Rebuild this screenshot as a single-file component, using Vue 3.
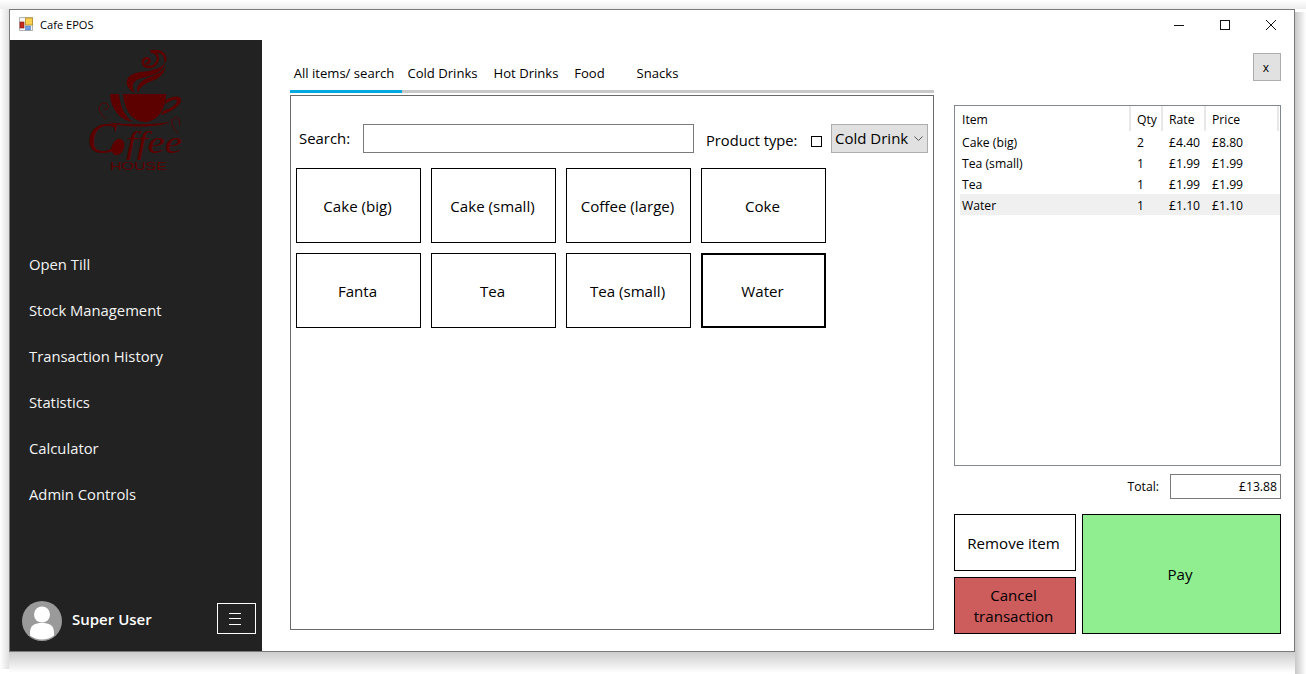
<script setup>
const nav = ['Open Till', 'Stock Management', 'Transaction History', 'Statistics', 'Calculator', 'Admin Controls']
const tabs = ['All items/ search', 'Cold Drinks', 'Hot Drinks', 'Food', 'Snacks']
const products = ['Cake (big)', 'Cake (small)', 'Coffee (large)', 'Coke', 'Fanta', 'Tea', 'Tea (small)', 'Water']
const rows = [
  { item: 'Cake (big)', qty: 2, rate: '£4.40', price: '£8.80' },
  { item: 'Tea (small)', qty: 1, rate: '£1.99', price: '£1.99' },
  { item: 'Tea', qty: 1, rate: '£1.99', price: '£1.99' },
  { item: 'Water', qty: 1, rate: '£1.10', price: '£1.10', selected: true }
]
</script>

<template>
  <div class="desk">
    <div class="window">
      <header class="titlebar">
        <svg class="app-icon" width="15" height="15" viewBox="0 0 15 15">
          <rect x="0.5" y="0.5" width="13" height="13" fill="#f4f4f4" stroke="#b5b5b5" />
          <rect x="1" y="5" width="4" height="6" fill="#c8281e" stroke="#7d1a14" stroke-width="0.6" />
          <rect x="6.5" y="1" width="7" height="7" fill="#f8d050" stroke="#b98a20" stroke-width="0.8" />
          <rect x="6.5" y="9" width="5" height="4" fill="#6f9fe6" stroke="#4a6fb0" stroke-width="0.5" />
        </svg>
        <span class="app-title">Cafe EPOS</span>
        <div class="controls">
          <svg width="12" height="12" viewBox="0 0 12 12"><path d="M1 6.5h10" stroke="#111" fill="none" /></svg>
          <svg width="12" height="12" viewBox="0 0 12 12"><rect x="1.5" y="1.5" width="9" height="9" stroke="#111" fill="none" /></svg>
          <svg width="12" height="12" viewBox="0 0 12 12"><path d="M1 1l10 10M11 1L1 11" stroke="#111" fill="none" /></svg>
        </div>
      </header>

      <div class="body">
        <aside class="sidebar">
          <svg class="logo" width="100" height="125" viewBox="86 48 100 125" fill="#5c0000">
            <path d="M146 63c3 1 5-3 2-4.500c-4-1-6.500 3-4.500 6c3 4 10 3 13-1.500c3-5 1-11-6-11.500c4-1 13-1 14.500 6c1 3 .5 3-.5 4" fill="none" stroke="#5c0000" stroke-width="2.400" />
            <path d="M165 60C165 68 152 71 141 72C132 73 125 77 127 85C128 88 132 92 135 93C130 85 134 80 142 78C152 76 165 72 165 60Z" />
            <path d="M165.500 66C162 75 148 76 141 82C137 86 136 90 138 93C140 86 146 83 152 81C160 78 165 73 165.500 66Z" />
            <path d="M123 94H166C166 108 158 122 145 122C131 122 124 108 123 94Z" />
            <path d="M110 94H119C120 106 125 117 133 122C120 120 111 110 110 94Z" />
            <path d="M166 100C172 96 181 95 181 100C181 106 170 112 161 115L163 111C170 109 177 104 177 101C177 98 170 101 165 104Z" />
            <path d="M108 122C125 125 150 125 170 122C160 128 120 128 108 122Z" />
            <path d="M106 119c-4-4-7-7-7-11c0-4 6-7 9-3c2 3-3 6-4 3" fill="none" stroke="#5c0000" stroke-width="0.9" />
            <path d="M178 133c-4-4-7-8-6-12c1-4 6-5 7-1c1 3 2 5 0 5" fill="none" stroke="#5c0000" stroke-width="0.9" />
            <text class="logo-c" x="87" y="153">C</text>
            <ellipse cx="118" cy="147" rx="6" ry="8.500" transform="rotate(20 118 147)" />
            <text class="logo-ffee" x="126" y="153" textLength="56" lengthAdjust="spacingAndGlyphs">ffee</text>
            <text class="logo-house" x="110" y="170" textLength="57" lengthAdjust="spacingAndGlyphs">HOUSE</text>
          </svg>

          <nav class="nav">
            <a v-for="n in nav" :key="n" class="nav-item">{{ n }}</a>
          </nav>

          <footer class="user">
            <svg class="avatar" width="40" height="40" viewBox="0 0 40 40">
              <circle cx="20" cy="20" r="20" fill="#9a9a9a" />
              <circle cx="20" cy="13.500" r="8" fill="#fff" />
              <path d="M8 32c0-8 5-10 12-10s12 2 12 10v2.500a20 20 0 0 1-24 0Z" fill="#fff" />
            </svg>
            <span class="user-name">Super User</span>
            <button class="menu-btn">
              <svg width="12" height="12" viewBox="0 0 12 12"><path d="M0 .5h12M0 5.500h12M0 11.500h12" stroke="#fff" fill="none" /></svg>
            </button>
          </footer>
        </aside>

        <main class="center">
          <div class="tabs">
            <div v-for="(t, i) in tabs" :key="t" class="tab" :class="{ active: i === 0 }">{{ t }}</div>
          </div>
          <section class="panel">
            <div class="search-row">
              <label class="search-label">Search:</label>
              <div class="search-input"></div>
              <span class="type-label">Product type:</span>
              <span class="checkbox"></span>
              <div class="select">
                <span>Cold Drink</span>
                <svg width="9" height="5" viewBox="0 0 9 5"><path d="M.5.5l4 4 4-4" stroke="#555" fill="none" /></svg>
              </div>
            </div>
            <div class="grid">
              <button v-for="p in products" :key="p" class="product" :class="{ focused: p === 'Water' }">{{ p }}</button>
            </div>
          </section>
        </main>

        <aside class="right">
          <button class="x-btn">x</button>
          <div class="list">
            <div class="list-head">
              <span>Item</span><span>Qty</span><span>Rate</span><span>Price</span>
            </div>
            <div v-for="r in rows" :key="r.item" class="list-row" :class="{ selected: r.selected }">
              <span>{{ r.item }}</span><span>{{ r.qty }}</span><span>{{ r.rate }}</span><span>{{ r.price }}</span>
            </div>
          </div>
          <div class="total-row">
            <span class="total-label">Total:</span>
            <div class="total-box">£13.88</div>
          </div>
          <div class="actions">
            <button class="act remove">Remove item</button>
            <button class="act pay">Pay</button>
            <button class="act cancel">Cancel<br />transaction</button>
          </div>
        </aside>
      </div>
    </div>
  </div>
</template>

<style>
html, body { margin: 0; background: #fff; }
</style>

<style scoped>
* { box-sizing: border-box; }
.desk {
  width: 1306px;
  height: 674px;
  padding: 9px 0 0 9px;
  background:
    linear-gradient(to bottom, rgba(0, 0, 0, .2), rgba(0, 0, 0, 0)) 9px 652px / 1286px 21px no-repeat,
    linear-gradient(to right, rgba(0, 0, 0, .22), rgba(0, 0, 0, 0)) 1295px 12px / 11px 662px no-repeat,
    linear-gradient(to top, rgba(0, 0, 0, .07), rgba(0, 0, 0, 0)) 0 0 / 1306px 9px no-repeat,
    linear-gradient(to left, rgba(0, 0, 0, .12), rgba(0, 0, 0, 0)) 0 9px / 9px 660px no-repeat,
    #fff;
}
.window {
  width: 1286px;
  height: 643px;
  border: 1px solid #7a7a7a;
  background: #fff;
  font-family: "Open Sans", "Noto Sans", sans-serif;
  color: #000;
  display: flex;
  flex-direction: column;
}
.titlebar { height: 30px; display: flex; align-items: center; padding-left: 9px; flex: none; }
.app-icon { margin-top: -1px; }
.app-title { font-size: 11.100px; margin: -1px 0 0 6px; }
.controls { margin-left: auto; display: flex; gap: 34px; margin-right: 17px; }
.body { flex: 1; display: flex; min-height: 0; }

.sidebar { width: 252px; background: #222; display: flex; flex-direction: column; color: #fff; flex: none; }
.logo { display: block; margin: 8px 0 0 76px; flex: none; }
.logo-c { font: italic 44px "Liberation Serif", serif; }
.logo-ffee { font: italic 32px "Liberation Serif", serif; }
.logo-house { font: 10.500px "Liberation Sans", sans-serif; }
.nav { margin-top: 68px; display: flex; flex-direction: column; }
.nav-item { height: 46px; line-height: 47px; padding-left: 19px; font-size: 14.800px; color: #f4f4f4; }
.user { margin-top: auto; display: flex; padding: 0 6px 10px 12px; }
.avatar { flex: none; }
.user-name { margin-left: 10px; font-size: 15px; font-weight: 600; line-height: 37px; }
.menu-btn {
  margin: 2px 0 0 auto; width: 39px; height: 31px; background: transparent; border: 1px solid #fff;
  padding: 0 3px 0 0; display: flex; align-items: center; justify-content: center;
}

.center { margin-left: 28px; width: 644px; padding-top: 20px; flex: none; }
.tabs {
  display: grid; grid-template-columns: 112px 81px 86px 41px 95px 1fr; height: 33px;
  border-bottom: 3px solid #c8c8c8;
}
.tab { height: 33px; font-size: 13.100px; line-height: 26px; text-align: center; white-space: nowrap; }
.tab.active { border-bottom: 3px solid #00a9e0; padding-right: 4px; }
.panel { margin-top: 2px; height: 535px; border: 1px solid #696969; padding: 28px 5px 0; }
.search-row { display: flex; height: 29px; align-items: flex-start; }
.search-label { margin-left: 3px; width: 64px; font-size: 14.900px; line-height: 29px; }
.search-input { width: 331px; height: 29px; border: 1px solid #7a7a7a; }
.type-label { margin-left: 12px; width: 105px; font-size: 14.700px; line-height: 33px; white-space: nowrap; }
.checkbox { width: 11px; height: 11px; border: 1px solid #000; margin-top: 12px; }
.select {
  margin-left: 9px; width: 97px; height: 29px; background: #e1e1e1; border: 1px solid #adadad;
  display: flex; align-items: center; padding: 0 4px 0 3px; font-size: 15px; justify-content: space-between;
}
.select span { margin-top: -1px; white-space: nowrap; }
.grid { margin-top: 15px; display: grid; grid-template-columns: repeat(4, 125px); grid-auto-rows: 75px; gap: 10px; }
.product { background: #fff; border: 1px solid #000; font: 15.100px "Open Sans", sans-serif; color: #000; padding: 0 2px 0 0; }
.product.focused { border-width: 2px; }

.right { margin-left: 20px; width: 327px; padding-top: 13px; display: flex; flex-direction: column; flex: none; }
.x-btn {
  align-self: flex-end; width: 28px; height: 28px; background: #e1e1e1; border: 1px solid #adadad;
  font: 12px "Open Sans", sans-serif; color: #000; padding: 0 2px 0 0;
}
.list { margin-top: 24px; height: 361px; border: 1px solid #828790; font-size: 12.200px; }
.list-head, .list-row { display: grid; grid-template-columns: 176px 32px 43px 73px; white-space: nowrap; }
.list-head { height: 25px; line-height: 27px; }
.list-head span { padding-left: 7px; border-right: 2px solid #e8e8e8; height: 25px; }
.list-head span:not(:first-child) { padding-left: 6px; }
.list-row { height: 21px; line-height: 23px; margin-left: 5px; grid-template-columns: 171px 32px 43px 73px; }
.list-row span { padding-left: 6px; }
.list-row span:first-child { padding-left: 2px; }
.list-row.selected { background: #f0f0f0; }
.total-row { margin-top: 8px; height: 25px; display: flex; justify-content: flex-end; align-items: center; font-size: 12.200px; }
.total-label { margin-right: 1px; }
.total-box { margin-left: 10px; width: 111px; height: 25px; line-height: 23px; border: 1px solid #7a7a7a; text-align: right; padding-right: 3px; }
.actions { margin-top: 15px; display: grid; grid-template-columns: 122px 199px; grid-template-rows: 57px 57px; gap: 6px; }
.act { border: 1px solid #000; font: 15.100px/21px "Open Sans", sans-serif; color: #000; padding: 1px 3px 0 0; }
.remove { background: #fff; }
.cancel { background: #cd5c5c; }
.pay { background: #90ee90; grid-row: span 2; }
</style>
